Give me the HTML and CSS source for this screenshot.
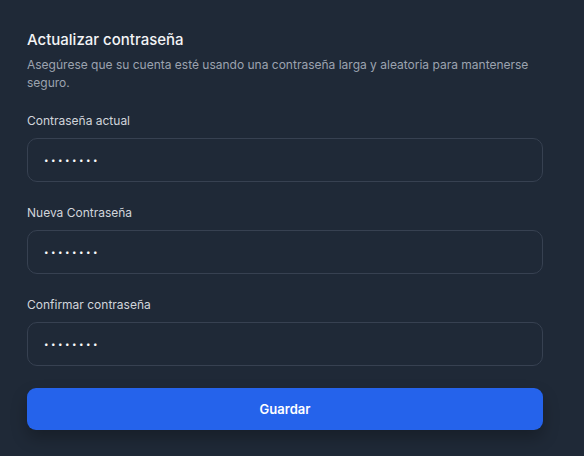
FILE: index.html
```html
<!DOCTYPE html>
<html lang="es">
<head>
<meta charset="utf-8">
<link rel="stylesheet" href="styles.css">
</head>
<body>
<section class="card">
  <header class="head">
    <h2 class="title">Actualizar contraseña</h2>
    <p class="desc">Asegúrese que su cuenta esté usando una contraseña larga y aleatoria para mantenerse seguro.</p>
  </header>
  <form class="form">
    <div class="field">
      <label class="label">Contraseña actual</label>
      <input class="input" type="password" value="12345678">
    </div>
    <div class="field">
      <label class="label">Nueva Contraseña</label>
      <input class="input" type="password" value="12345678">
    </div>
    <div class="field">
      <label class="label">Confirmar contraseña</label>
      <input class="input" type="password" value="12345678">
    </div>
    <button class="btn" type="button">Guardar</button>
  </form>
</section>
</body>
</html>
```
FILE: styles.css
```css
* { box-sizing: border-box; }
html, body { margin: 0; height: 100%; }
body {
  background: #1f2937;
  font-family: Inter, "Noto Sans", sans-serif;
  color: #f3f4f6;
}
.card {
  padding: 29px 41px 0 27px;
}
.head { margin-bottom: 20px; }
.title {
  margin: 0;
  font-size: 15px;
  font-weight: 450;
  line-height: 22px;
  color: #f3f4f6;
}
.desc {
  margin: 5px 0 0;
  font-size: 12px;
  line-height: 18px;
  color: #9ca3af;
}
.form {
  display: flex;
  flex-direction: column;
  gap: 22px;
}
.field {
  display: flex;
  flex-direction: column;
  gap: 8px;
}
.label {
  font-size: 12px;
  line-height: 18px;
  color: #d1d5db;
}
.input {
  height: 44px;
  border: 1px solid #374151;
  border-radius: 10px;
  background: #1f2937;
  color: #f9fafb;
  padding: 0 16px;
  font-family: inherit;
  font-size: 8px;
  letter-spacing: 2.5px;
  outline: none;
}
.btn {
  height: 42px;
  border: 0;
  border-radius: 9px;
  background: #2563eb;
  color: #fff;
  font-family: inherit;
  font-size: 13px;
  font-weight: 600;
  box-shadow: 0 8px 16px rgba(0,0,0,0.25);
}
```
